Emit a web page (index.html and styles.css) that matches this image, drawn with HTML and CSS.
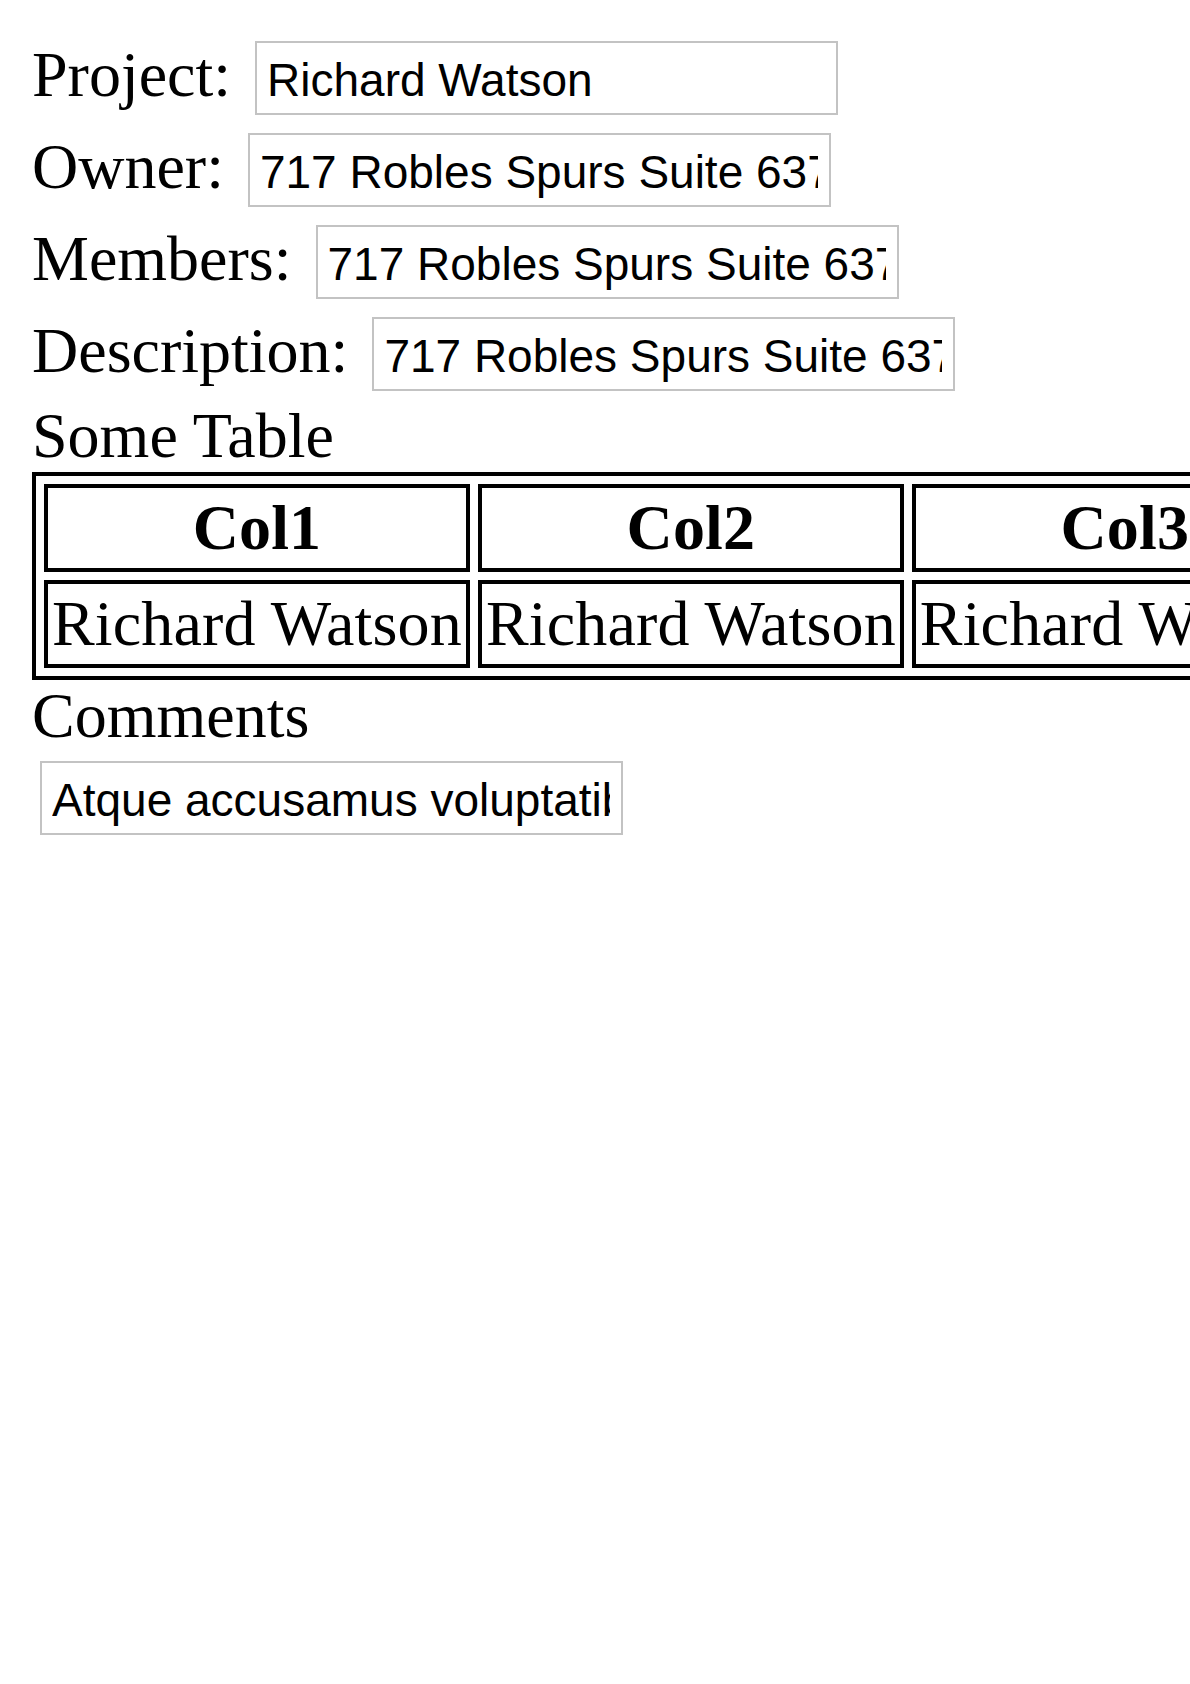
FILE: index.html
```html
<!DOCTYPE html>
<html lang="en">
<head>
<meta charset="utf-8">
<title>Project</title>
<link rel="stylesheet" href="styles.css">
</head>
<body>
<div class="field"><label class="field-label">Project:</label> <input class="text-input" type="text" value="Richard Watson"></div>
<div class="field"><label class="field-label">Owner:</label> <input class="text-input" type="text" value="717 Robles Spurs Suite 637"></div>
<div class="field"><label class="field-label">Members:</label> <input class="text-input" type="text" value="717 Robles Spurs Suite 637"></div>
<div class="field"><label class="field-label">Description:</label> <input class="text-input" type="text" value="717 Robles Spurs Suite 637"></div>
<div class="section-title">Some Table</div>
<table class="data-table">
<thead>
<tr><th>Col1</th><th>Col2</th><th>Col3</th></tr>
</thead>
<tbody>
<tr><td>Richard Watson</td><td>Richard Watson</td><td>Richard Watson</td></tr>
</tbody>
</table>
<div class="section-title">Comments</div>
<div class="field"><input class="text-input" type="text" value="Atque accusamus voluptatibus eum"></div>
</body>
</html>
```

FILE: styles.css
```css
html {
  background: #fff;
  overflow-x: hidden;
}

body {
  margin: 32px 0 32px 32px;
  font: 64px/72px "Liberation Serif", "Times New Roman", serif;
  color: #000;
}

.field {
  display: block;
}

.field-label {
  font: inherit;
}

.text-input {
  box-sizing: border-box;
  width: 583px;
  height: 74px;
  margin: 9px 8px 9px 8px;
  padding: 4px 11px 0 10px;
  border: 2px solid #c3c3c3;
  border-radius: 0;
  background: #fff;
  color: #000;
  font: 46px "Liberation Sans", Arial, sans-serif;
  vertical-align: baseline;
  outline: none;
}

.section-title {
  display: block;
}

.data-table {
  border: 4px solid #000;
  border-spacing: 8px;
  font: inherit;
}

.data-table th,
.data-table td {
  border: 4px solid #000;
  padding: 4px;
  white-space: nowrap;
  letter-spacing: 0.15px;
}

.data-table th {
  font-weight: bold;
  text-align: center;
}

.data-table td {
  text-align: left;
}
```
